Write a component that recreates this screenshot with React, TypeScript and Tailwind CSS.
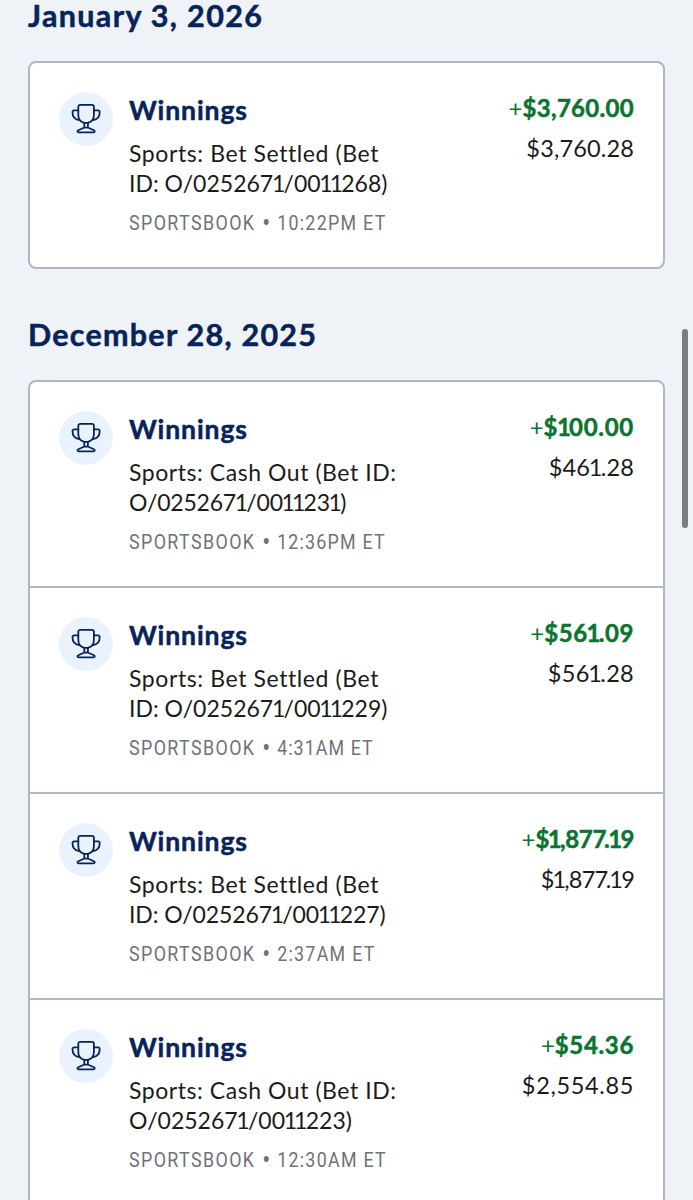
interface Transaction {
  id: string;
  description: [string, string];
  tracking: [string, string];
  time: string;
  timeTracking: string;
  amount: string;
  amountTracking: string;
  balance: string;
  balanceTracking: string;
}

interface DayGroup {
  date: string;
  tracking: string;
  transactions: Transaction[];
}

const groups: DayGroup[] = [
  {
    date: "January 3, 2026",
    tracking: "tracking-[1.35px]",
    transactions: [
      { id: "0011268", description: ["Sports: Bet Settled (Bet", "ID: O/0252671/0011268)"], tracking: ["tracking-[0.6px]", "tracking-[0px]"], time: "10:22PM ET", timeTracking: "tracking-[1.5px]", amount: "$3,760.00", amountTracking: "tracking-[0.3px]", balance: "$3,760.28", balanceTracking: "tracking-[0.15px]" },
    ],
  },
  {
    date: "December 28, 2025",
    tracking: "tracking-[1.25px]",
    transactions: [
      { id: "0011231", description: ["Sports: Cash Out (Bet ID:", "O/0252671/0011231)"], tracking: ["tracking-[0.55px]", "tracking-[-0.2px]"], time: "12:36PM ET", timeTracking: "tracking-[1.4px]", amount: "$100.00", amountTracking: "tracking-[0.7px]", balance: "$461.28", balanceTracking: "tracking-[0.15px]" },
      { id: "0011229", description: ["Sports: Bet Settled (Bet", "ID: O/0252671/0011229)"], tracking: ["tracking-[0.6px]", "tracking-[0px]"], time: "4:31AM ET", timeTracking: "tracking-[1.25px]", amount: "$561.09", amountTracking: "tracking-[0.6px]", balance: "$561.28", balanceTracking: "tracking-[0.3px]" },
      { id: "0011227", description: ["Sports: Bet Settled (Bet", "ID: O/0252671/0011227)"], tracking: ["tracking-[0.6px]", "tracking-[-0.1px]"], time: "2:37AM ET", timeTracking: "tracking-[1.5px]", amount: "$1,877.19", amountTracking: "tracking-[-0.3px]", balance: "$1,877.19", balanceTracking: "tracking-[-0.8px]" },
      { id: "0011223", description: ["Sports: Cash Out (Bet ID:", "O/0252671/0011223)"], tracking: ["tracking-[0.55px]", "tracking-[0px]"], time: "12:30AM ET", timeTracking: "tracking-[1.5px]", amount: "$54.36", amountTracking: "tracking-[0.65px]", balance: "$2,554.85", balanceTracking: "tracking-[0.65px]" },
    ],
  },
];

// Lato's figures are tabular, so pull in the "1" and a "7" before the decimal point
function Figures({ text, className }: { text: string; className: string }) {
  return (
    <span className={className}>
      {text.split(/(1|7(?=\.))/).map((part, i) => {
        if (part === "1") return <span key={i} className="-ml-[1.3px] tracking-[-1.7px]">1</span>;
        if (part === "7") return <span key={i} className="tracking-[-2.4px]">7</span>;
        return part;
      })}
    </span>
  );
}

function TrophyIcon() {
  return (
    <svg width="32" height="32" viewBox="0 0 32 32" fill="none" stroke="#06235a" strokeWidth="1.8" strokeLinejoin="round" strokeLinecap="round">
      <path d="M10.300 1.800h11.600a2 2 0 0 1 2 2v8.200c0 4.200-2.800 7-6 7.900h-3.600c-3.200-.9-6-3.700-6-7.900V3.800a2 2 0 0 1 2-2z" />
      <path d="M8.300 7.400H4.100a1.600 1.600 0 0 0-1.600 1.600c0 4.200 2 7.400 6.600 8" />
      <path d="M23.900 7.400h4.200a1.600 1.600 0 0 1 1.600 1.600c0 4.200-2 7.400-6.600 8" />
      <path d="M14.300 19.900v4.800M17.900 19.900v4.800M13.900 24.700h4.400l5.600 2.600c1.400.7.900 2.100-.3 2.100H8.600c-1.200 0-1.700-1.400-.3-2.100z" />
    </svg>
  );
}

function TransactionRow({ tx }: { tx: Transaction }) {
  return (
    <li className="flex h-[206px] items-start border-b-2 border-[#b2b6c0] px-[29px] pt-[29px] last:h-[204px] last:border-b-0">
      <div className="flex size-[54px] shrink-0 items-center justify-center rounded-full bg-[#eaf2fe]">
        <TrophyIcon />
      </div>
      <div className="ml-4 flex-1 whitespace-nowrap">
        <h3 className="text-[26.5px] font-bold leading-9 tracking-[0.9px] text-[#06235a] [-webkit-text-stroke:0.5px]">Winnings</h3>
        <div className="mt-[10px] text-[23px] leading-[30px] text-[#1b1b1b]">
          <p className={tx.tracking[0]}>{tx.description[0]}</p>
          <p><Figures text={tx.description[1]} className={tx.tracking[1]} /></p>
        </div>
        <p className="mt-[13px] flex origin-left scale-x-[0.85] font-['Roboto',sans-serif] text-[21px] leading-6 text-[#6f7278]">
          <span className="tracking-[1.65px]">SPORTSBOOK</span>
          <span className="w-[25.5px] text-center text-[28px]">•</span>
          <span className={tx.timeTracking}>{tx.time}</span>
        </p>
      </div>
      <div className="whitespace-nowrap text-right">
        <p className="text-[24px] leading-8 text-[#0a7430]">
          +<Figures text={tx.amount} className={`font-bold [-webkit-text-stroke:0.5px] ${tx.amountTracking}`} />
        </p>
        <p className="mt-2 text-[23.5px] leading-8 text-[#1b1b1b]">
          <Figures text={tx.balance} className={tx.balanceTracking} />
        </p>
      </div>
    </li>
  );
}

export default function App() {
  return (
    <div className="relative h-[1200px] w-[693px] overflow-hidden bg-[#eff3f8] px-7 font-['Lato',sans-serif]">
      {groups.map((group) => (
        <section key={group.date} className="mb-[50px]">
          <h2 className="flex h-[61px] items-start whitespace-nowrap text-[30.5px] font-bold leading-[30px] text-[#06235a] [-webkit-text-stroke:0.5px]">
            <span className={group.tracking}>{group.date}</span>
          </h2>
          <ul className="overflow-hidden rounded-lg border-2 border-[#b2b6c0] bg-white">
            {group.transactions.map((tx) => <TransactionRow key={tx.id} tx={tx} />)}
          </ul>
        </section>
      ))}
      <div className="absolute right-[5px] top-[329px] h-[199px] w-[6px] rounded-full bg-[#7a7d82]" />
    </div>
  );
}
